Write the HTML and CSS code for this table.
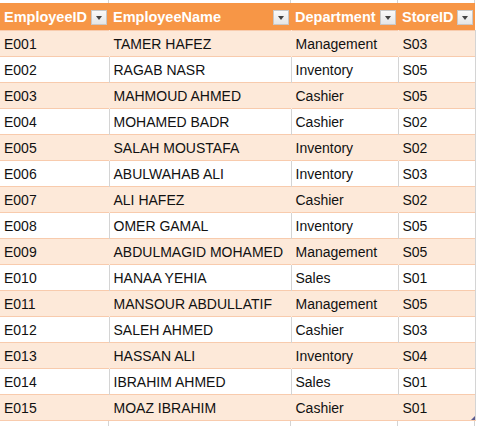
FILE: index.html
```
<!DOCTYPE html>
<html lang="en">
<head>
    <meta charset="UTF-8">
    <title>Employees</title>
    <link rel="stylesheet" href="styles.css">
</head>
<body>
    <div class="sheet">
        <div class="top-row">
            <span class="cell c1"></span><span class="cell c2"></span><span class="cell c3"></span><span class="cell c4"></span>
        </div>
        <table class="emp-table">
            <thead>
                <tr>
                    <th class="c1"><div class="hd"><span>EmployeeID</span><span class="drop"></span></div></th>
                    <th class="c2"><div class="hd"><span>EmployeeName</span><span class="drop"></span></div></th>
                    <th class="c3"><div class="hd"><span>Department</span><span class="drop"></span></div></th>
                    <th class="c4"><div class="hd"><span>StoreID</span><span class="drop"></span></div></th>
                </tr>
            </thead>
            <tbody>
                <tr><td>E001</td><td>TAMER HAFEZ</td><td>Management</td><td>S03</td></tr>
                <tr><td>E002</td><td>RAGAB NASR</td><td>Inventory</td><td>S05</td></tr>
                <tr><td>E003</td><td>MAHMOUD AHMED</td><td>Cashier</td><td>S05</td></tr>
                <tr><td>E004</td><td>MOHAMED BADR</td><td>Cashier</td><td>S02</td></tr>
                <tr><td>E005</td><td>SALAH MOUSTAFA</td><td>Inventory</td><td>S02</td></tr>
                <tr><td>E006</td><td>ABULWAHAB ALI</td><td>Inventory</td><td>S03</td></tr>
                <tr><td>E007</td><td>ALI HAFEZ</td><td>Cashier</td><td>S02</td></tr>
                <tr><td>E008</td><td>OMER GAMAL</td><td>Inventory</td><td>S05</td></tr>
                <tr><td>E009</td><td>ABDULMAGID MOHAMED</td><td>Management</td><td>S05</td></tr>
                <tr><td>E010</td><td>HANAA YEHIA</td><td>Sales</td><td>S01</td></tr>
                <tr><td>E011</td><td>MANSOUR ABDULLATIF</td><td>Management</td><td>S05</td></tr>
                <tr><td>E012</td><td>SALEH AHMED</td><td>Cashier</td><td>S03</td></tr>
                <tr><td>E013</td><td>HASSAN ALI</td><td>Inventory</td><td>S04</td></tr>
                <tr><td>E014</td><td>IBRAHIM AHMED</td><td>Sales</td><td>S01</td></tr>
                <tr><td>E015</td><td>MOAZ IBRAHIM</td><td>Cashier</td><td>S01<span class="resize"></span></td></tr>
            </tbody>
        </table>
        <div class="bottom-row">
            <span class="cell c1"></span><span class="cell c2"></span><span class="cell c3"></span><span class="cell c4"></span>
        </div>
    </div>
</body>
</html>
```

FILE: styles.css
```
body {
    margin: 0;
    background: #ffffff;
    font-family: "Liberation Sans", Arial, sans-serif;
    overflow: hidden;
}
.sheet {
    width: 479px;
    height: 426px;
    overflow: hidden;
}
.top-row,
.bottom-row {
    display: flex;
}
.top-row .cell {
    height: 3px;
    border-right: 1px solid #d4d4d4;
    box-sizing: border-box;
}
.bottom-row .cell {
    height: 10px;
    border-right: 1px solid #d4d4d4;
    box-sizing: border-box;
}
.cell.c1 { width: 109px; }
.cell.c2 { width: 182px; }
.cell.c3 { width: 107px; }
.cell.c4 { width: 77px; }
.emp-table {
    border-collapse: collapse;
    table-layout: fixed;
    width: 475px;
}
.emp-table th.c1 { width: 109px; }
.emp-table th.c2 { width: 182px; }
.emp-table th.c3 { width: 107px; }
.emp-table th.c4 { width: 77px; }
.emp-table th {
    background: #f79646;
    color: #ffffff;
    font-weight: bold;
    font-size: 14.5px;
    height: 27px;
    padding: 0 2px 0 4px;
    text-align: left;
    box-sizing: border-box;
}
.hd {
    display: flex;
    align-items: center;
    justify-content: space-between;
    padding-top: 2px;
}
.drop {
    width: 14px;
    height: 13px;
    background: linear-gradient(#fafafa, #e6e6e6);
    border: 1px solid #c8c8c8;
    position: relative;
    flex: none;
}
.drop::after {
    content: "";
    position: absolute;
    left: 4px;
    top: 5px;
    border-left: 3.5px solid transparent;
    border-right: 3.5px solid transparent;
    border-top: 4px solid #444;
}
.emp-table td {
    height: 26px;
    padding: 2px 3px 0 4px;
    font-size: 14px;
    color: #111111;
    border-top: 1px solid #f8cbad;
    border-right: 1px solid #d4d4d4;
    box-sizing: border-box;
    white-space: nowrap;
    overflow: hidden;
    position: relative;
}
.emp-table td:last-child {
    border-right: 1px solid #d4d4d4;
}
.emp-table tbody tr:nth-child(odd) td {
    background: #fde9d9;
    border-right-color: #fde9d9;
}
.emp-table tbody tr:nth-child(odd) td:last-child {
    border-right-color: #d4d4d4;
}
.emp-table tbody tr:last-child td {
    border-bottom: 1px solid #f8cbad;
}
.resize {
    position: absolute;
    right: 0;
    bottom: 0;
    width: 0;
    height: 0;
    border-left: 4px solid transparent;
    border-bottom: 4px solid #5b5b8f;
}
```
